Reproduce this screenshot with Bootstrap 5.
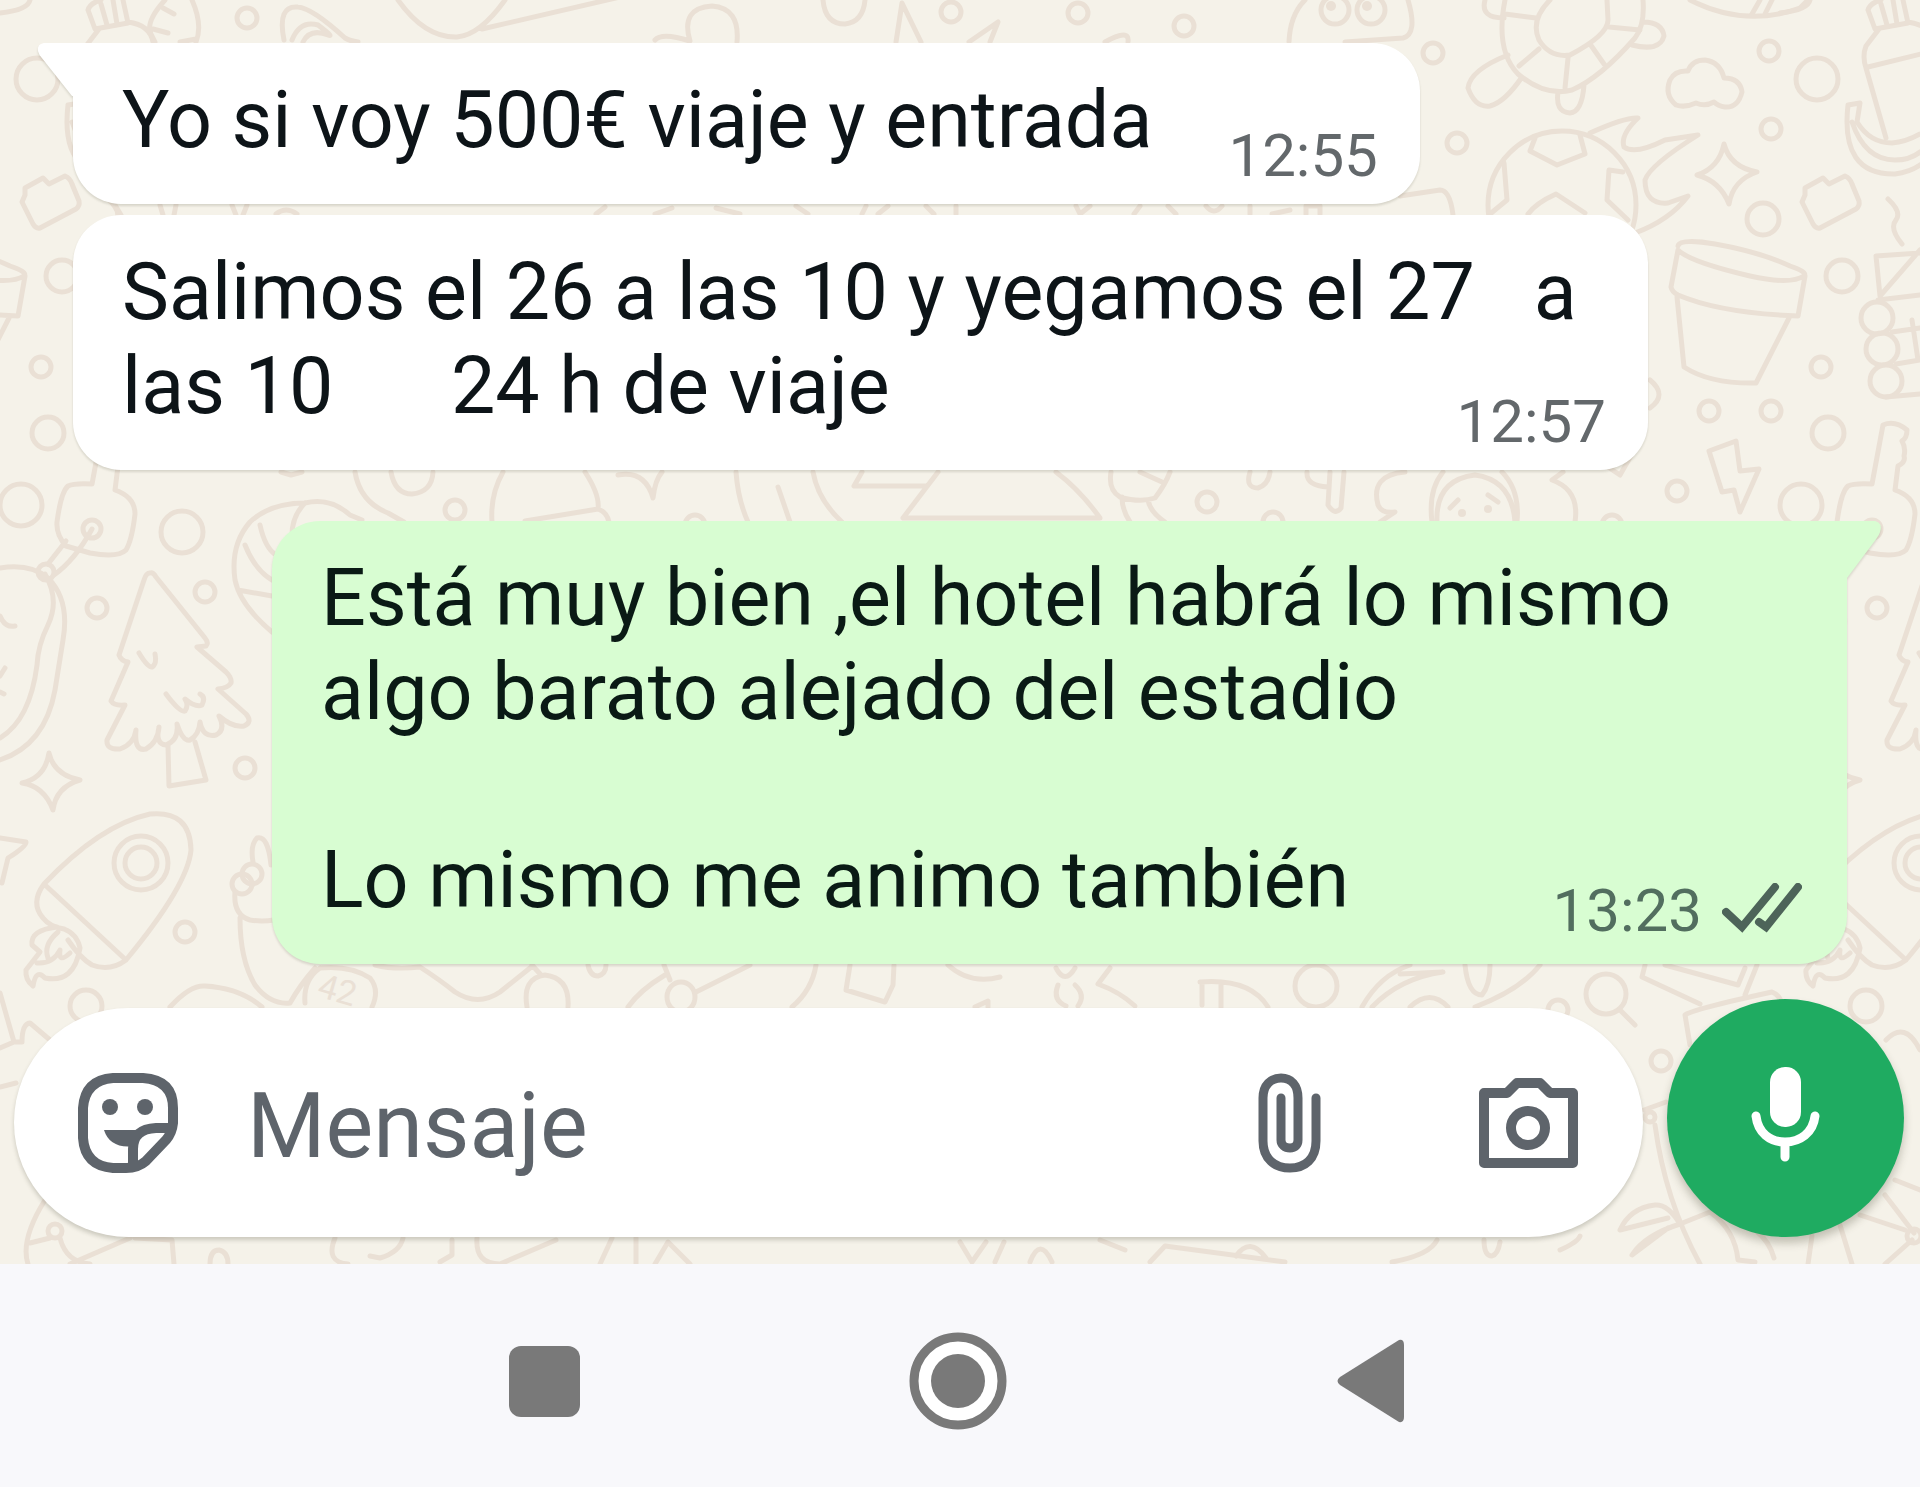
<!DOCTYPE html>
<html lang="es">
<head>
<meta charset="utf-8">
<meta name="viewport" content="width=device-width, initial-scale=1">
<title>Chat</title>
<link href="https://cdn.jsdelivr.net/npm/bootstrap@5.3.0/dist/css/bootstrap.min.css" rel="stylesheet">
<style>
  body { font-family: Roboto, "Liberation Sans", sans-serif; background: #f8f8fb; }
  .chat-area { background: #f5f2e9; padding: 43px 0 27px; }
  .doodles { inset: 0; width: 100%; height: 100%; fill: none; stroke: #eae0d5; stroke-width: 5; stroke-linecap: round; stroke-linejoin: round; }
  .doodles .dots { fill: #eae0d5; stroke: none; }
  .doodle-num { font: 34px Roboto, sans-serif; fill: #eae0d5; stroke: none; }
  .thread { padding: 0 73px; }
  .bubble { max-width: 1575px; padding: 30px 42px 37px 49px; border-radius: 48px; font-size: 79px; line-height: 94px; color: #0d1418; white-space: pre-wrap; filter: drop-shadow(0 2px 1px rgba(60, 60, 40, .16)); }
  .bubble-in { background: #fff; }
  .bubble-out { background: #d8fdd2; color: #0a1a15; }
  .tail-in { border-top-left-radius: 0; }
  .tail-out { border-top-right-radius: 0; }
  .tail { top: 0; width: 36px; height: 57px; }
  .tail-in .tail { right: 100%; fill: #fff; }
  .tail-out .tail { left: 100%; fill: #d8fdd2; }
  .stamp { font-size: 60px; line-height: 68px; color: #63686b; margin: 49px 0 -24px 76px; }
  .bubble-out .stamp { color: #526e5f; margin-top: 44px; }
  .ticks { width: 80px; height: 50px; margin: 0 3px 6px 20px; fill: none; stroke: #4d6459; stroke-width: 8; stroke-linecap: round; }
  .next-msg { margin-top: 11px; }
  .next-turn { margin-top: 51px; }
  .composer { margin-top: 35px; padding: 0 16px 0 14px; gap: 24px; }
  .entry { height: 229px; padding: 0 65px 0 64px; box-shadow: 0 3px 4px rgba(60, 60, 40, .22); }
  .entry button, .soft-keys button { line-height: 0; }
  .entry svg { color: #5e646b; }
  .entry-text { font-size: 90px; line-height: 108px; margin: 8px 12px 0 69px; color: #5e646b; outline: 0; }
  .entry-text::placeholder { color: #5e646b; opacity: 1; }
  .clip-btn { margin-right: 158px; }
  .mic-btn { width: 237px; height: 238px; padding: 0 0 6px; background: #1fab61; box-shadow: 0 6px 8px rgba(60, 60, 40, .28); }
  .soft-keys { gap: 313px; padding: 10px 4px 0 0; fill: #797979; }
</style>
</head>
<body class="d-flex flex-column min-vh-100">
<main class="chat-area position-relative overflow-hidden">
  <svg class="doodles position-absolute" viewBox="0 0 1920 1264" preserveAspectRatio="xMidYMin slice" aria-hidden="true">
    <defs>
      <g id="tile">
        <!-- bottle, leaf and banana -->
        <path d="M88 10L95 29L128 23L123 0M88 10Q90 3 101 0M101 4L107 25M113 0L117 24M99 29L86 46Q82 56 86 68L106 138M88 67L145 53M128 22Q150 25 153 42M165 0Q145 22 151 34L155 42M192 0Q203 25 196 42M163 8L174 14M153 29L168 33M180 42L196 39"/>
        <path d="M68 105L80 103L77 122Q90 143 112 143Q126 142 140 134M68 105Q60 175 115 174Q130 172 140 165M72 122Q85 160 115 160Q130 160 140 152"/>
        <path d="M284 40Q277 5 298 7Q312 8 345 38Q350 41 358 42M292 40Q300 20 318 25Q335 38 328 35Q310 28 303 42"/>
        <circle cx="37" cy="79" r="21"/><circle cx="247" cy="18" r="10"/>
        <path d="M0 13Q28 10 30 0"/>
        <!-- bread -->
        <path d="M25 188L43 178L49 184L65 176Q70 178 72 184L79 201Q80 206 76 209L40 228Q36 229 33 224L22 202L25 195Z"/>
        <!-- plant pot -->
        <path d="M-102 246Q-100 238 -65 244Q-20 252 10 266Q28 272 24 276Q10 285 -30 276Q-90 262 -102 250L-109 287Q-108 292 -102 295Q-60 313 18 316L25 276M-103 297L-96 367Q-70 384 -24 383L9 318"/>
        <circle cx="62" cy="276" r="16"/><circle cx="41" cy="367" r="10"/><circle cx="48" cy="433" r="16"/>
        <path d="M108 199Q122 212 116 220Q109 228 122 244M140 253L96 256L100 296L140 250M98 300L140 295"/>
        <circle cx="97" cy="318" r="16"/><circle cx="102" cy="349" r="16"/><circle cx="106" cy="381" r="16"/>
        <path d="M112 332L140 328M116 364L140 360M106 397L140 394M132 320L138 360"/>
        <!-- key with ring -->
        <path d="M103 425Q115 420 127 430Q127 438 122 441Q126 448 124 456Q126 462 118 466L115 490Q135 497 135 514Q132 540 126 550Q118 558 90 553L66 546Q56 535 57 522Q61 492 68 486Q74 483 92 484Z"/>
        <circle cx="92" cy="529" r="9"/><circle cx="46" cy="572" r="8"/>
        <path d="M66 541L48 564M92 529Q75 560 54 575"/>
        <circle cx="21" cy="505" r="21"/><circle cx="182" cy="532" r="21"/><circle cx="205" cy="592" r="10"/><circle cx="97" cy="608" r="10"/>
        <path d="M0 568Q30 563 48 578Q70 600 63 640L55 690Q45 745 0 760M45 574Q60 600 48 625Q38 645 37 665Q30 720 0 738M0 616Q5 628 15 626M0 676L5 668M0 692L4 694"/>
        <!-- fir tree -->
        <path d="M150 573Q146 573 144 580L119 655Q121 661 128 662L111 701Q114 706 125 705L107 740Q106 750 120 749Q134 744 136 730Q134 752 146 749Q158 742 159 727Q155 744 166 745Q179 740 177 724Q183 742 190 740Q199 735 200 722Q203 738 216 735Q226 730 219 716Q233 728 244 726Q253 722 246 714L218 689Q228 688 231 683Q232 678 226 672L197 647L206 646Q209 643 205 638L156 577Q153 572 150 573ZM168 746L169 786L206 780L195 742M139 653Q148 668 152 667Q157 664 155 654M166 694Q180 713 185 711Q189 705 185 699Q196 708 202 705Q206 697 200 694"/>
        <circle cx="245" cy="768" r="10"/>
        <path d="M49 753Q54 775 80 780Q56 787 53 810Q44 786 22 783Q45 778 49 753Z"/>
        <path d="M0 838L26 842Q27 846 8 858L2 883"/>
        <!-- rocket -->
        <path d="M44 884Q100 825 150 814Q190 810 191 850Q188 885 126 960Q110 972 92 965Q80 958 68 940M44 884Q30 903 43 918Q50 927 64 929M44 884L126 960M57 927Q30 930 32 945L40 952L26 970Q25 980 33 986Q36 968 45 978Q74 984 80 948Q77 934 64 929M58 932Q43 945 48 958M37 963Q53 964 60 950Q58 964 70 953"/>
        <circle cx="141" cy="863" r="27"/><circle cx="141" cy="863" r="16"/><circle cx="185" cy="932" r="10"/><circle cx="86" cy="1006" r="16"/>
      </g>
    </defs>
    <use href="#tile"/><use href="#tile" x="1780"/>

    <!-- top edge -->
    <path d="M398 0Q425 38 457 37Q480 35 505 0M482 29L620 -3M655 40Q662 32 690 41Q680 8 712 6Q740 8 737 42M823 0Q825 24 845 24Q863 22 865 0M896 42L902 3L921 42M969 42L998 22L990 42M1105 42Q1130 28 1128 42"/>
    <circle cx="951" cy="12" r="10"/><circle cx="1078" cy="13" r="10"/><circle cx="1184" cy="26" r="10"/>
    <path d="M1289 42Q1290 15 1305 0M1408 0Q1418 34 1403 38L1345 42"/>
    <circle cx="1335" cy="10" r="14"/><circle cx="1371" cy="10" r="14"/>
    <g class="dots"><circle cx="1331" cy="6" r="5"/><circle cx="1367" cy="6" r="5"/></g>
    <!-- turtle -->
    <path d="M1505 0Q1495 50 1518 74Q1545 97 1572 90Q1600 78 1635 38Q1645 25 1643 0M1550 0Q1530 20 1539 40Q1550 58 1570 55Q1608 35 1608 20L1607 0M1505 14L1536 18M1539 49L1519 66M1568 58L1565 88M1590 44L1604 64M1609 27L1640 30M1508 55Q1470 70 1468 88Q1475 108 1490 106Q1505 102 1522 77M1643 22Q1662 22 1664 36Q1660 52 1632 45M1558 92Q1555 112 1570 113Q1582 112 1584 85M1485 0Q1480 18 1504 18"/>
    <path d="M1690 0Q1745 28 1800 8L1808 0M1752 14L1760 0M1765 14L1772 0"/>
    <path d="M1676 105Q1664 95 1670 80Q1675 70 1688 71Q1692 60 1705 60Q1720 62 1724 78Q1740 78 1742 92Q1738 108 1725 107Q1718 106 1714 102Q1705 107 1696 103Q1685 108 1676 105Z"/>
    <!-- flaming football -->
    <circle cx="1562" cy="205" r="74"/>
    <path d="M1590 133Q1625 117 1638 118Q1620 135 1624 147Q1635 155 1665 140L1698 135Q1650 165 1645 180Q1645 205 1668 203L1688 196Q1670 220 1635 233M1535 138L1530 151L1557 165L1585 154L1580 135M1504 163L1507 200L1490 214M1623 172L1609 170L1607 200L1628 220M1528 214Q1536 203 1556 194L1585 213"/>
    <path d="M1724 144Q1730 167 1757 172Q1733 180 1729 204Q1720 181 1697 175Q1719 168 1724 144ZM1400 196L1440 190Q1450 190 1453 215"/>
    <circle cx="1433" cy="53" r="10"/><circle cx="1457" cy="143" r="10"/><circle cx="1769" cy="51" r="10"/><circle cx="1771" cy="129" r="10"/><circle cx="1763" cy="219" r="16"/><circle cx="1709" cy="411" r="10"/><circle cx="1771" cy="411" r="10"/><circle cx="1677" cy="491" r="10"/>
    <path d="M1650 380Q1668 395 1650 408M1608 467L1620 475L1640 440M1709 451L1736 441L1740 471L1759 469L1740 512L1734 490L1722 492Z"/>
    <!-- strip between the two thin white bubbles -->
    <path d="M115 205L121 215M160 205L163 215M176 205L174 215M232 205L236 215M247 205L243 215M276 214Q286 206 297 214M596 214L605 207M655 214L672 208M716 208L740 214M796 206L808 214M862 214L866 206M878 214L888 206M926 206L934 214M956 206V214M1076 206L1080 214L1090 206M1134 214L1140 206M1168 206L1176 214M1206 206Q1214 216 1222 206M1250 206V214M1272 214L1290 210M1306 214V206H1320V214"/>
    <!-- shell and middle strip -->
    <path d="M272 632Q240 605 235 580Q230 545 250 522Q270 503 305 503Q330 497 350 515L362 520M260 525Q265 548 276 555M305 503Q292 516 292 535M245 545Q255 570 272 580M238 590L272 596"/>
    <path d="M281 472L291 475L302 472M355 472Q360 502 388 513L404 522M391 472Q395 494 412 494Q432 492 433 472M503 472Q490 495 492 522M585 472Q600 495 598 509L525 521M598 509Q607 512 609 522M618 475Q645 470 653 498Q655 480 662 472M736 472Q738 500 748 522M778 487L790 522M813 472Q818 500 842 522M862 472L854 486L926 486M938 472L903 518L1100 518Q1080 490 1056 472M1111 472Q1108 490 1120 497Q1140 503 1155 498Q1165 485 1170 472M1140 472L1162 482M1122 497Q1122 510 1130 522M1148 500Q1150 512 1165 522M1250 472Q1245 488 1258 488Q1268 485 1270 472M1307 472Q1306 486 1328 487M1330 472L1328 505Q1335 516 1341 508L1344 472M1405 472Q1370 475 1378 505Q1382 514 1395 512L1380 522M1443 472Q1428 490 1432 522M1502 472Q1520 490 1517 522M1437 522Q1435 480 1475 475Q1512 480 1515 522M1450 508L1458 500M1488 495L1498 502M1563 472L1552 480Q1580 490 1575 522"/>
    <circle cx="455" cy="510" r="10"/><circle cx="695" cy="525" r="10"/><circle cx="1207" cy="502" r="10"/><circle cx="1273" cy="522" r="10"/><circle cx="1612" cy="525" r="10"/>
    <g class="dots"><circle cx="1462" cy="513" r="4"/><circle cx="1488" cy="509" r="4"/></g>
    <!-- pointing hand, sock and hills -->
    <path d="M271 865Q268 835 257 838Q250 845 253 862M235 892Q233 915 250 920Q262 922 274 920M240 918Q240 960 255 985Q270 1005 290 1003Q300 985 315 968M320 968Q350 965 370 978Q380 990 372 1007M320 968Q303 980 305 1003M170 1007Q190 985 205 986Q240 988 262 1007"/>
    <circle cx="252" cy="874" r="10"/><circle cx="242" cy="884" r="10"/>
    <text class="doodle-num" x="316" y="996" transform="rotate(16 316 996)">42</text>
    <path d="M375 965Q395 970 420 967Q440 980 455 992Q478 1007 500 992L530 968M527 1007Q522 978 545 975Q570 978 568 1007M532 965L541 975M588 965Q590 976 598 976Q606 974 606 965M664 965L670 980M665 975Q640 990 628 1007M696 992L750 965M816 965Q812 990 792 1007M850 965L846 990L885 1002L893 985L894 965M948 965Q970 985 1000 977M975 1007L988 1001V1007M1200 982Q1250 978 1268 1007M1202 984V1005M1221 985V1007M1362 1007Q1380 975 1410 965M1372 1007Q1400 978 1443 972L1400 974M1410 1007Q1430 988 1448 1007M1465 965Q1468 995 1482 995Q1490 985 1490 965M1540 965Q1520 990 1475 1007"/>
    <ellipse cx="681" cy="997" rx="14" ry="15"/><circle cx="1316" cy="986" r="21"/><circle cx="1558" cy="1010" r="10"/>
    <!-- bicycle-like curls -->
    <path d="M1056 968Q1065 985 1075 968M1058 985Q1052 1000 1066 1006M1075 985Q1086 995 1078 1006M1110 968L1098 984Q1120 992 1135 1006"/>
    <circle cx="1606" cy="994" r="20"/><circle cx="1661" cy="1061" r="10"/>
    <path d="M1620 1010L1635 1025M1645 965L1642 977L1700 1004M1665 965L1738 985L1745 968M1757 965L1745 995M1690 1045L1685 1015Q1690 1010 1772 992Q1780 995 1782 1005"/>
    <!-- bottom corners -->
    <path d="M0 993L14 1042L0 1048M14 1042L22 1042Q22 1024 30 1023L50 1040M0 1087L16 1083M45 1200Q20 1240 28 1264M30 1243L50 1238M60 1238Q66 1262 90 1264M70 1264L130 1238M135 1238L172 1240L174 1264M210 1264Q210 1250 219 1250Q228 1252 228 1264M335 1238Q325 1262 348 1264M403 1238Q400 1252 380 1258L370 1256M452 1240V1255L440 1262M477 1238Q475 1264 500 1264L556 1240M600 1264L612 1238M636 1238V1264M655 1264L668 1242L690 1264"/>
    <circle cx="55" cy="1231" r="7"/>
    <path d="M960 1242L972 1262L986 1242M995 1262L1004 1242M1030 1262Q1040 1236 1052 1262M1100 1240L1125 1250M1150 1262L1165 1246L1285 1262M1236 1256Q1250 1236 1266 1258M1392 1262Q1430 1255 1437 1240M1484 1240Q1484 1256 1492 1256Q1498 1254 1500 1242M1560 1250Q1578 1242 1580 1236M1644 1110L1666 1102M1655 1125Q1665 1200 1700 1264M1680 1224Q1668 1204 1655 1205Q1630 1208 1620 1230L1668 1218M1680 1224Q1645 1235 1632 1255L1668 1228M1680 1224L1710 1212Q1735 1230 1738 1260L1755 1262M1720 1215Q1765 1225 1774 1258M1886 1040Q1905 1020 1920 1050M1895 1180L1920 1190M1885 1195L1914 1233M1808 1264L1812 1236M1840 1225L1852 1264M1860 1215L1905 1230M1885 1264L1912 1240"/>
    <circle cx="1650" cy="1117" r="5"/><circle cx="1914" cy="1236" r="7"/>
  </svg>

  <div class="thread position-relative d-flex flex-column align-items-start">
    <div class="bubble bubble-in tail-in position-relative"><svg class="tail position-absolute" viewBox="0 0 37 57" preserveAspectRatio="none" aria-hidden="true"><path d="M37 0H7Q0 1 1 8Q2 12 5 15L36 53H37Z"/></svg>Yo si voy 500€ viaje y entrada<time class="stamp float-end">12:55</time></div>
    <div class="bubble bubble-in next-msg">Salimos el 26 a las 10 y yegamos el 27   a las 10      24 h de viaje<time class="stamp float-end">12:57</time></div>
    <div class="bubble bubble-out tail-out next-turn align-self-end position-relative"><svg class="tail position-absolute" viewBox="0 0 37 57" preserveAspectRatio="none" aria-hidden="true"><path d="M0 0H29Q37 2 34 11Q33 14 30 18L0 57Z"/></svg>Está muy bien ,el hotel habrá lo mismo algo barato alejado del estadio

Lo mismo me animo también<span class="stamp float-end d-flex align-items-center"><time>13:23</time><svg class="ticks" viewBox="0 0 80 50" role="img" aria-label="Entregado"><path d="M4 29L20 44L53 4M37 39L44 44L76 4"/></svg></span></div>
  </div>

  <form class="composer position-relative d-flex align-items-end">
    <div class="entry flex-grow-1 d-flex align-items-center bg-white rounded-pill">
      <button type="button" class="border-0 bg-transparent p-0" aria-label="Emojis y stickers">
        <svg width="100" height="100" viewBox="0 0 100 100" fill="none" stroke="currentColor" stroke-width="10"><path d="M35 5H65Q95 7 95 35V50Q94 60 88 67L68 88Q60 95 48 95H35Q7 93 5 65V35Q7 7 35 5Z"/><path d="M92 55H78Q55 56 55 76V94"/><path d="M26 57H66L56 73Q32 76 26 57Z" fill="currentColor" stroke="none"/><circle cx="32" cy="34" r="8" fill="currentColor" stroke="none"/><circle cx="67" cy="34" r="8" fill="currentColor" stroke="none"/></svg>
      </button>
      <input type="text" class="entry-text flex-grow-1 border-0 bg-transparent p-0 w-25" placeholder="Mensaje" aria-label="Mensaje">
      <button type="button" class="clip-btn border-0 bg-transparent p-0" aria-label="Adjuntar">
        <svg width="63" height="100" viewBox="0 0 63 100" fill="none" stroke="currentColor" stroke-width="9" stroke-linecap="round"><path d="M58 25V68C58 86 47 95 32 95S5 86 5 68V25C5 12 13 5 23 5S40 12 40 25V67C40 72 37 75 32 75S23 72 23 67V25"/></svg>
      </button>
      <button type="button" class="border-0 bg-transparent p-0" aria-label="Cámara">
        <svg width="99" height="100" viewBox="0 0 99 100" fill="none" stroke="currentColor" stroke-width="10" stroke-linejoin="round"><path d="M5 20H28L38 10H61L71 20H94V90H5Z"/><circle cx="49" cy="55" r="17"/></svg>
      </button>
    </div>
    <button type="button" class="mic-btn flex-shrink-0 border-0 rounded-circle d-flex align-items-center justify-content-center" aria-label="Grabar mensaje de voz">
      <svg width="69" height="96" viewBox="0 0 69 96" fill="none" stroke="#fff" stroke-width="9" stroke-linecap="round"><rect x="19" y="0" width="31" height="60" rx="15" fill="#fff" stroke="none"/><path d="M5 49C7 66 19 75 34 75S62 66 64 49M34 76V90"/></svg>
    </button>
  </form>
</main>

<nav class="soft-keys flex-grow-1 d-flex justify-content-center align-items-center" aria-label="Navegación del sistema">
  <button type="button" class="border-0 bg-transparent p-0" aria-label="Recientes"><svg width="100" height="100"><rect x="14" y="15" width="71" height="71" rx="12"/></svg></button>
  <button type="button" class="border-0 bg-transparent p-0" aria-label="Inicio"><svg width="100" height="100"><circle cx="50" cy="50" r="44" fill="#fff" stroke="#797979" stroke-width="9"/><circle cx="50" cy="50" r="27"/></svg></button>
  <button type="button" class="border-0 bg-transparent p-0" aria-label="Atrás"><svg width="100" height="100"><path d="M19 46L78 9Q83 8 83 14V86Q83 92 78 91L19 54Q14 50 19 46Z"/></svg></button>
</nav>
<script src="https://cdn.jsdelivr.net/npm/bootstrap@5.3.0/dist/js/bootstrap.bundle.min.js"></script>
</body>
</html>
